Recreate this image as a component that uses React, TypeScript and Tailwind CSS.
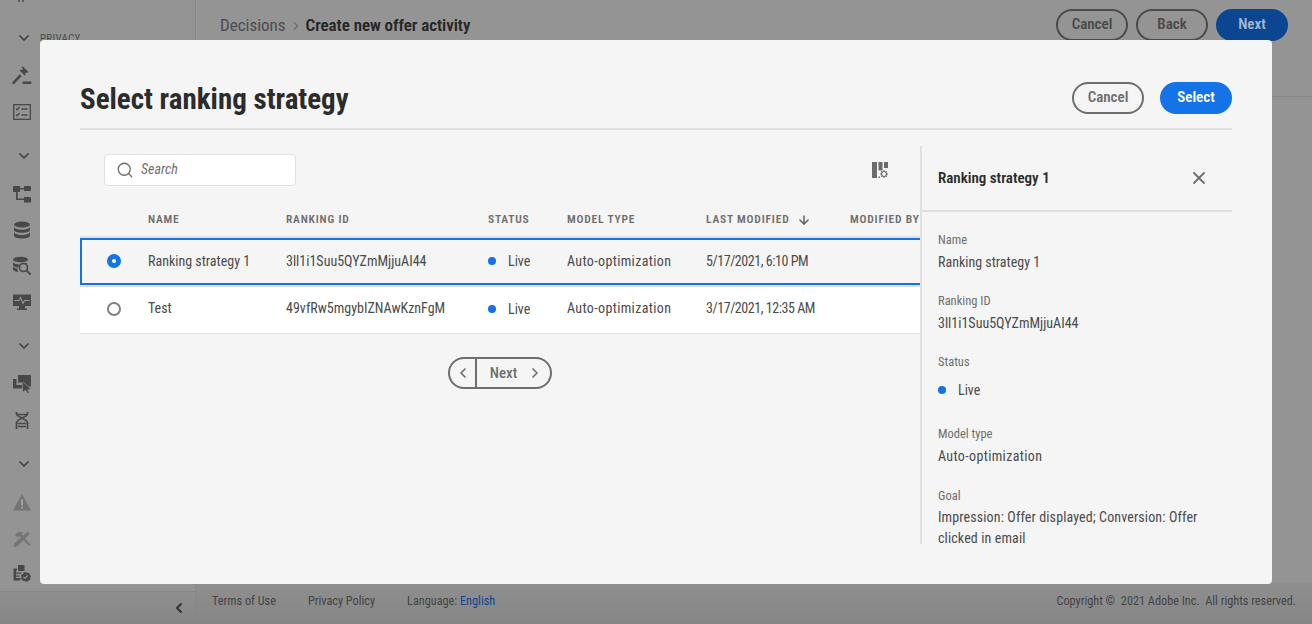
import React from 'react';
import { ChevronDown, ChevronLeft, ChevronRight, Search, X, ArrowDown } from 'lucide-react';

const GavelIcon = () => (
  <svg width="20" height="20" viewBox="0 0 20 20" fill="#484848">
    <path d="M9.6 1.2l1.1-1 5.6 5.6-1 1.1-1-.7-1.2 1.2.6 1-1.1 1.1-5-5 1.1-1.1 1 .6 1.2-1.2z" />
    <path d="M7.6 8.2l2 2-7.2 7.6c-.5.5-1.3.5-1.8 0s-.5-1.300 0-1.800z" />
    <rect x="10.500" y="15.500" width="9" height="2.500" rx="1" />
  </svg>
);

const ChecklistIcon = () => (
  <svg width="18" height="16" viewBox="0 0 18 16" fill="none" stroke="#484848" strokeWidth="1.300">
    <rect x="0.700" y="0.700" width="16.600" height="14.600" />
    <path d="M3 4.500l1.300 1.300L6.500 3M3 10.500l1.300 1.300L6.500 9M8.500 5h6M8.500 11h6" />
  </svg>
);

const TreeIcon = () => (
  <svg width="18" height="18" viewBox="0 0 18 18" fill="#484848">
    <rect x="0" y="1" width="7" height="6" rx="0.500" />
    <rect x="11" y="1" width="7" height="5" rx="0.500" />
    <rect x="11" y="12" width="7" height="5.500" rx="0.500" />
    <path d="M6 3h6v1.500H6zM3 6h1.700v7.500H12V15H3z" />
  </svg>
);

const DatabaseIcon = () => (
  <svg width="18" height="18" viewBox="0 0 18 18" fill="#484848">
    <ellipse cx="9" cy="3.500" rx="8" ry="3" />
    <path d="M1 5.500c0 2 3.600 3.200 8 3.200s8-1.200 8-3.200v3.200c0 1.800-3.600 3-8 3s-8-1.200-8-3z" />
    <path d="M1 10.800c0 2 3.600 3.200 8 3.200s8-1.200 8-3.200V14.500c0 1.800-3.600 3-8 3s-8-1.200-8-3z" />
  </svg>
);

const DataSearchIcon = () => (
  <svg width="20" height="20" viewBox="0 0 20 20" fill="#484848">
    <ellipse cx="8.500" cy="3.500" rx="7.500" ry="2.800" />
    <path d="M1 5.500c0 1.800 3.200 3 7 3l-2 3c-2.500-.3-5-1.200-5-2.800zM1 10c0 1.500 2 2.300 4.500 2.700l.5 3.300C3.500 15.700 1 14.700 1 13.300z" />
    <circle cx="11.500" cy="11.500" r="4" fill="none" stroke="#484848" strokeWidth="1.600" />
    <path d="M14.400 14.400l4.200 4.200" stroke="#484848" strokeWidth="2" />
    <path d="M15 6.500v3l-1.500-1.500z" />
  </svg>
);

const MonitorIcon = () => (
  <svg width="18" height="18" viewBox="0 0 18 18">
    <path d="M0 1.500h18v11.500H0z" fill="#484848" />
    <path d="M6 13h6v2.500h2V17H4v-1.500h2z" fill="#484848" />
    <path d="M1.500 7.500h4.500l1.500-3 2.500 6 1.500-3h5" fill="none" stroke="#949494" strokeWidth="1.100" />
  </svg>
);

const WindowsIcon = () => (
  <svg width="18" height="18" viewBox="0 0 18 18" fill="#484848">
    <path d="M5 0h13v11.500h-2.500L10 6.500v1H5z" />
    <path d="M0 4h3.500v6h5.500v3.500H0z" />
    <path d="M9.500 6.800l8 7.200-3.400.4 1.800 3.300-1.500.3-1.800-3.200-2.600 2z" />
  </svg>
);

const DnaIcon = () => (
  <svg width="14" height="17" viewBox="0 0 14 17" fill="none" stroke="#484848" strokeWidth="1.700">
    <path d="M1.500 0v2c0 3 11 5 11 8.500V17M12.500 0v2c0 3-11 5-11 8.500V17" />
    <path d="M2 2.500h10M3 14.500h8M2.500 11.500h9" />
  </svg>
);

const WarningIcon = () => (
  <svg width="18" height="17" viewBox="0 0 18 17">
    <path d="M9 0l9 16.500H0z" fill="#757575" />
    <path d="M8.100 5.500h1.800v6H8.100zM8.100 12.700h1.800v1.800H8.100z" fill="#a8a8a8" />
  </svg>
);

const ToolsIcon = () => (
  <svg width="18" height="17" viewBox="0 0 18 17" fill="#757575">
    <path d="M5 2h5.500l-2 2 9 10.500-1.500 1.500L6.500 6 5 7.500 2 5.500z" />
    <path d="M15 1.500l2 2L4 16.500 0.500 17 1 13.500z" />
  </svg>
);

const DocsCheckIcon = () => (
  <svg width="18" height="18" viewBox="0 0 18 18" fill="#484848">
    <path d="M5 0h6.500v6H7L5 6z" />
    <path d="M0.500 3.500h3.500v2H3v7.500h4.500v2.500H.5z" />
    <path d="M2.500 7.500h6v1.300h-6zM2.500 10.500h4v1.300h-4z" />
    <path d="M12.500 7l1.500 1 2-.2.7 1.700 1.300 1.500-.9 1.700.3 2-1.900.6-1.200 1.600-1.800-.8-1.900.5-.9-1.700-1.700-1 .4-1.900-.4-1.900 1.800-.9.900-1.700z" />
    <path d="M10.500 12l1.500 1.500 2.700-3" fill="none" stroke="#949494" strokeWidth="1.200" />
  </svg>
);

const ColumnSettingsIcon = () => (
  <svg width="18" height="18" viewBox="0 0 18 18" fill="#6b6b6b">
    <rect x="1" y="1" width="5" height="16" />
    <rect x="7.500" y="1" width="4" height="8.500" />
    <rect x="7.500" y="15.500" width="1.500" height="1.500" />
    <rect x="13" y="1" width="4" height="6" />
    <circle cx="13" cy="13" r="2.500" fill="none" stroke="#6b6b6b" strokeWidth="1.100" />
    <path d="M13 9v1.300M13 15.700V17M9 13h1.300M15.700 13H17M10.200 10.200l.9.9M14.900 14.900l.9.9M15.800 10.200l-.9.9M11.100 14.900l-.9.9" stroke="#6b6b6b" strokeWidth="1" />
  </svg>
);

const sections = [
  [<GavelIcon />, <ChecklistIcon />],
  [<TreeIcon />, <DatabaseIcon />, <DataSearchIcon />, <MonitorIcon />],
  [<WindowsIcon />, <DnaIcon />],
  [<WarningIcon />, <ToolsIcon />, <DocsCheckIcon />],
];

const rows = [
  { name: 'Ranking strategy 1', id: '3ll1i1Suu5QYZmMjjuAI44', modified: '5/17/2021, 6:10 PM', selected: true },
  { name: 'Test', id: '49vfRw5mgybIZNAwKznFgM', modified: '3/17/2021, 12:35 AM', selected: false },
];

const columns = 'grid grid-cols-[68px_138px_202px_79px_139px_144px_74px] items-center';

function Field({ label, className, children }: { label: string; className: string; children: React.ReactNode }) {
  return (
    <div className={className}>
      <div className="text-[12.500px] leading-5 text-[#6e6e6e]">{label}</div>
      {children}
    </div>
  );
}

export default function App() {
  return (
    <div className="relative flex h-[624px] w-[1312px] overflow-hidden bg-[#949494] font-['Roboto',sans-serif] font-stretch-[75%]">
      {/* Sidebar */}
      <div className="flex w-[196px] flex-none flex-col border-r border-[#878787]">
        <div className="h-[591px]">
          <div className="flex h-5 items-start gap-[2px] pl-[18px]">
            <span className="h-[2px] w-[2px] bg-[#5c5c5c]" />
            <span className="h-[2px] w-[2px] bg-[#5c5c5c]" />
          </div>
          {sections.map((items, i) => (
            <div key={i} className="mb-2">
              <div className="flex h-9 items-center gap-2 pl-[16px]">
                <ChevronDown className="h-4 w-4 text-[#3f3f3f]" strokeWidth={2.500} />
                {i === 0 && <span className="pt-[3px] text-[11px] tracking-wide text-[#4b4b4b]">PRIVACY</span>}
              </div>
              <div className="mt-0.5">
                {items.map((icon, j) => (
                  <div key={j} className="flex h-9 w-[44px] items-center justify-center">
                    {icon}
                  </div>
                ))}
              </div>
            </div>
          ))}
        </div>
        <div className="flex h-[33px] items-center justify-end border-t border-[#878787] bg-gradient-to-b from-[#8f8f8f] to-[#868686] pr-[8px]">
          <ChevronLeft className="h-4 w-4 text-[#333333]" strokeWidth={3} />
        </div>
      </div>

      {/* Page behind the dialog */}
      <div className="flex min-w-0 flex-1 flex-col">
        <div className="flex h-[97px] items-start justify-between border-b border-[#878787] px-6 pt-[9px]">
          <div className="flex h-8 items-center pt-0.5 text-[17px]">
            <span className="text-[#4c4c4c]">Decisions</span>
            <ChevronRight className="mx-[3px] h-3.5 w-3.5 text-[#6d6d6d]" />
            <span className="font-semibold tracking-[-0.05px] text-[#262626]">Create new offer activity</span>
          </div>
          <div className="flex gap-2">
            <button className="h-8 w-[72px] rounded-full border-2 border-[#4a4a4a] pb-0.5 text-[15px] font-semibold text-[#4a4a4a]">Cancel</button>
            <button className="h-8 w-[72px] rounded-full border-2 border-[#4a4a4a] pb-0.5 text-[15px] font-semibold text-[#4a4a4a]">Back</button>
            <button className="h-8 w-[72px] rounded-full bg-[#0d4690] pb-0.5 text-[15px] font-semibold text-[#a3b6d3]">Next</button>
          </div>
        </div>
        <div className="flex-1" />
        <div className="flex h-[42px] items-center justify-between bg-gradient-to-b from-[#8f8f8f] to-[#868686] px-4 pb-[4px] text-[12.250px] text-[#444444]">
          <div className="flex gap-8">
            <span>Terms of Use</span>
            <span>Privacy Policy</span>
            <span>
              Language: <span className="text-[#0d4690]">English</span>
            </span>
          </div>
          <span>Copyright ©&nbsp; 2021 Adobe Inc.&nbsp; All rights reserved.</span>
        </div>
      </div>

      {/* Dialog */}
      <div className="absolute left-[40px] top-[40px] flex h-[544px] w-[1232px] flex-col rounded-[4px] bg-[#f5f5f5] px-10">
        <div className="flex items-center justify-between border-b-2 border-[#e1e1e1] pb-[14px] pt-[42px]">
          <h1 className="pt-0.5 text-[29px] font-bold leading-[30px] text-[#2c2c2c]">Select ranking strategy</h1>
          <div className="flex gap-4">
            <button className="h-8 w-[72px] rounded-full border-2 border-[#6e6e6e] pb-0.5 text-[15px] font-semibold text-[#6e6e6e]">Cancel</button>
            <button className="h-8 w-[72px] rounded-full bg-[#1473e6] pb-0.5 text-[15px] font-semibold text-white">Select</button>
          </div>
        </div>

        <div className="mt-4 flex h-[398px]">
          {/* Table */}
          <div className="flex w-[840px] flex-none flex-col overflow-hidden">
            <div className="flex items-center justify-between pl-6 pr-[31px] pt-2">
              <div className="flex h-8 w-[192px] items-center rounded-[4px] border border-[#e1e1e1] bg-white pl-[11px]">
                <Search className="h-[18px] w-[18px] text-[#6e6e6e]" strokeWidth={1.700} />
                <span className="ml-[7px] pb-0.5 text-[14px] italic text-[#707070]">Search</span>
              </div>
              <ColumnSettingsIcon />
            </div>
            <div className={`${columns} mt-4 h-[36px] border-b-2 border-[#e1e1e1] pt-0.5 text-[11.500px] font-semibold tracking-[0.07em] text-[#6e6e6e]`}>
              <span />
              <span>NAME</span>
              <span>RANKING ID</span>
              <span>STATUS</span>
              <span>MODEL TYPE</span>
              <span className="flex items-center gap-2">
                LAST MODIFIED
                <ArrowDown className="h-3.5 w-3.5 text-[#5c5c5c]" strokeWidth={2.500} />
              </span>
              <span className="whitespace-nowrap">MODIFIED BY</span>
            </div>
            {rows.map((row) => (
              <div
                key={row.id}
                className={
                  row.selected
                    ? `${columns} h-[47px] w-[844px] pb-px text-[14px] text-[#4b4b4b] outline-2 -outline-offset-2 outline-[#1473e6]`
                    : `${columns} h-[49px] border-t-2 border-b border-[#e1e1e1] bg-white pb-[3px] text-[14px] text-[#4b4b4b]`
                }
              >
                <span className="flex justify-center">
                  {row.selected ? (
                    <span className="h-[14px] w-[14px] rounded-full border-[5px] border-[#1473e6] bg-white" />
                  ) : (
                    <span className="h-[14px] w-[14px] rounded-full border-2 border-[#808080] bg-white" />
                  )}
                </span>
                <span>{row.name}</span>
                <span>{row.id}</span>
                <span className="flex items-center gap-[12px]">
                  <span className="h-2 w-2 rounded-full bg-[#1473e6]" />
                  <span className="pt-px">Live</span>
                </span>
                <span className="tracking-[0.35px]">Auto-optimization</span>
                <span className="tracking-[-0.45px]">{row.modified}</span>
                <span />
              </div>
            ))}
            <div className="mt-[23px] flex justify-center">
              <div className="flex h-8 w-[104px] items-stretch rounded-full border-2 border-[#6e6e6e] text-[15px] font-medium text-[#6e6e6e]">
                <span className="flex w-[27px] items-center justify-center border-r-2 border-[#6e6e6e]">
                  <ChevronLeft className="h-4 w-4" strokeWidth={2.500} />
                </span>
                <span className="flex flex-1 items-center justify-center gap-[10px] pl-1.5">
                  Next
                  <ChevronRight className="h-4 w-4" strokeWidth={2.500} />
                </span>
              </div>
            </div>
          </div>

          {/* Detail panel */}
          <div className="flex-1 border-l-2 border-[#e1e1e1]">
            <div className="flex h-[66px] items-center justify-between border-b-2 border-[#e1e1e1] pl-4 pr-[23px]">
              <span className="text-[15px] font-semibold text-[#2c2c2c]">Ranking strategy 1</span>
              <X className="h-5 w-5 text-[#6e6e6e]" strokeWidth={2.200} />
            </div>
            <div className="pl-4 pr-8 text-[14px] text-[#4b4b4b]">
              <Field label="Name" className="mt-[18px]">
                <div className="mt-[1px] leading-[22px]">Ranking strategy 1</div>
              </Field>
              <Field label="Ranking ID" className="mt-[18px]">
                <div className="mt-[1px] leading-[22px]">3ll1i1Suu5QYZmMjjuAI44</div>
              </Field>
              <Field label="Status" className="mt-[18px]">
                <div className="mt-[7px] flex items-center gap-[12px] leading-[22px]">
                  <span className="h-2 w-2 rounded-full bg-[#1473e6]" />
                  Live
                </div>
              </Field>
              <Field label="Model type" className="mt-[23px]">
                <div className="mt-[1px] leading-[22px] tracking-[0.35px]">Auto-optimization</div>
              </Field>
              <Field label="Goal" className="mt-[19px]">
                <div className="mt-[1px] leading-[21px] tracking-[0.12px]">Impression: Offer displayed; Conversion: Offer clicked in email</div>
              </Field>
            </div>
          </div>
        </div>
      </div>
    </div>
  );
}
